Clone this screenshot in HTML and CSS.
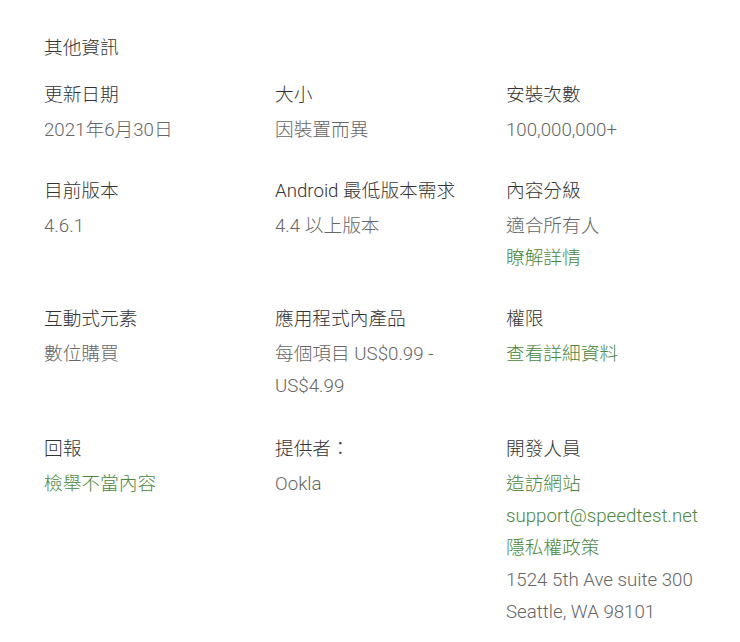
FILE: index.html
```html
<!DOCTYPE html>
<html lang="zh-Hant">
<head>
<meta charset="utf-8">
<link rel="stylesheet" href="styles.css">
</head>
<body>
<div class="info">
  <h2 class="title">其他資訊</h2>
  <div class="grid">
    <div class="item">
      <div class="label">更新日期</div>
      <div class="value">2021年6月30日</div>
    </div>
    <div class="item">
      <div class="label">大小</div>
      <div class="value">因裝置而異</div>
    </div>
    <div class="item">
      <div class="label">安裝次數</div>
      <div class="value">100,000,000+</div>
    </div>
    <div class="item">
      <div class="label">目前版本</div>
      <div class="value">4.6.1</div>
    </div>
    <div class="item">
      <div class="label">Android 最低版本需求</div>
      <div class="value">4.4 以上版本</div>
    </div>
    <div class="item">
      <div class="label">內容分級</div>
      <div class="value">適合所有人</div>
      <div class="value"><a class="link" href="#">瞭解詳情</a></div>
    </div>
    <div class="item">
      <div class="label">互動式元素</div>
      <div class="value">數位購買</div>
    </div>
    <div class="item">
      <div class="label">應用程式內產品</div>
      <div class="value narrow">每個項目 US$0.99 - US$4.99</div>
    </div>
    <div class="item">
      <div class="label">權限</div>
      <div class="value"><a class="link" href="#">查看詳細資料</a></div>
    </div>
    <div class="item last">
      <div class="label">回報</div>
      <div class="value"><a class="link" href="#">檢舉不當內容</a></div>
    </div>
    <div class="item last">
      <div class="label">提供者：</div>
      <div class="value">Ookla</div>
    </div>
    <div class="item last">
      <div class="label">開發人員</div>
      <div class="value"><a class="link" href="#">造訪網站</a></div>
      <div class="value"><a class="link" href="#">support@speedtest.net</a></div>
      <div class="value"><a class="link" href="#">隱私權政策</a></div>
      <div class="value">1524 5th Ave suite 300</div>
      <div class="value">Seattle, WA 98101</div>
    </div>
  </div>
</div>
</body>
</html>
```

FILE: styles.css
```css
html, body {
  margin: 0;
  padding: 0;
  background: #ffffff;
}
body {
  font-family: Roboto, "Noto Sans CJK TC", "Noto Sans", sans-serif;
  font-size: 18.7px;
  font-weight: 300;
  line-height: 32px;
  color: #333333;
}
.info {
  padding: 32px 0 0 44px;
}
.title {
  margin: 0 0 15px 0;
  font-size: 18.7px;
  font-weight: 300;
  line-height: 32px;
  color: #333333;
}
.grid {
  display: grid;
  grid-template-columns: 231px 231px 1fr;
  row-gap: 29px;
}
.item.last {
  margin-top: 2px;
}
.label {
  color: #333333;
  margin-bottom: 3px;
}
.value {
  color: #666666;
}
.narrow {
  max-width: 180px;
}
.link {
  color: #4a873c;
  text-decoration: none;
}
```
